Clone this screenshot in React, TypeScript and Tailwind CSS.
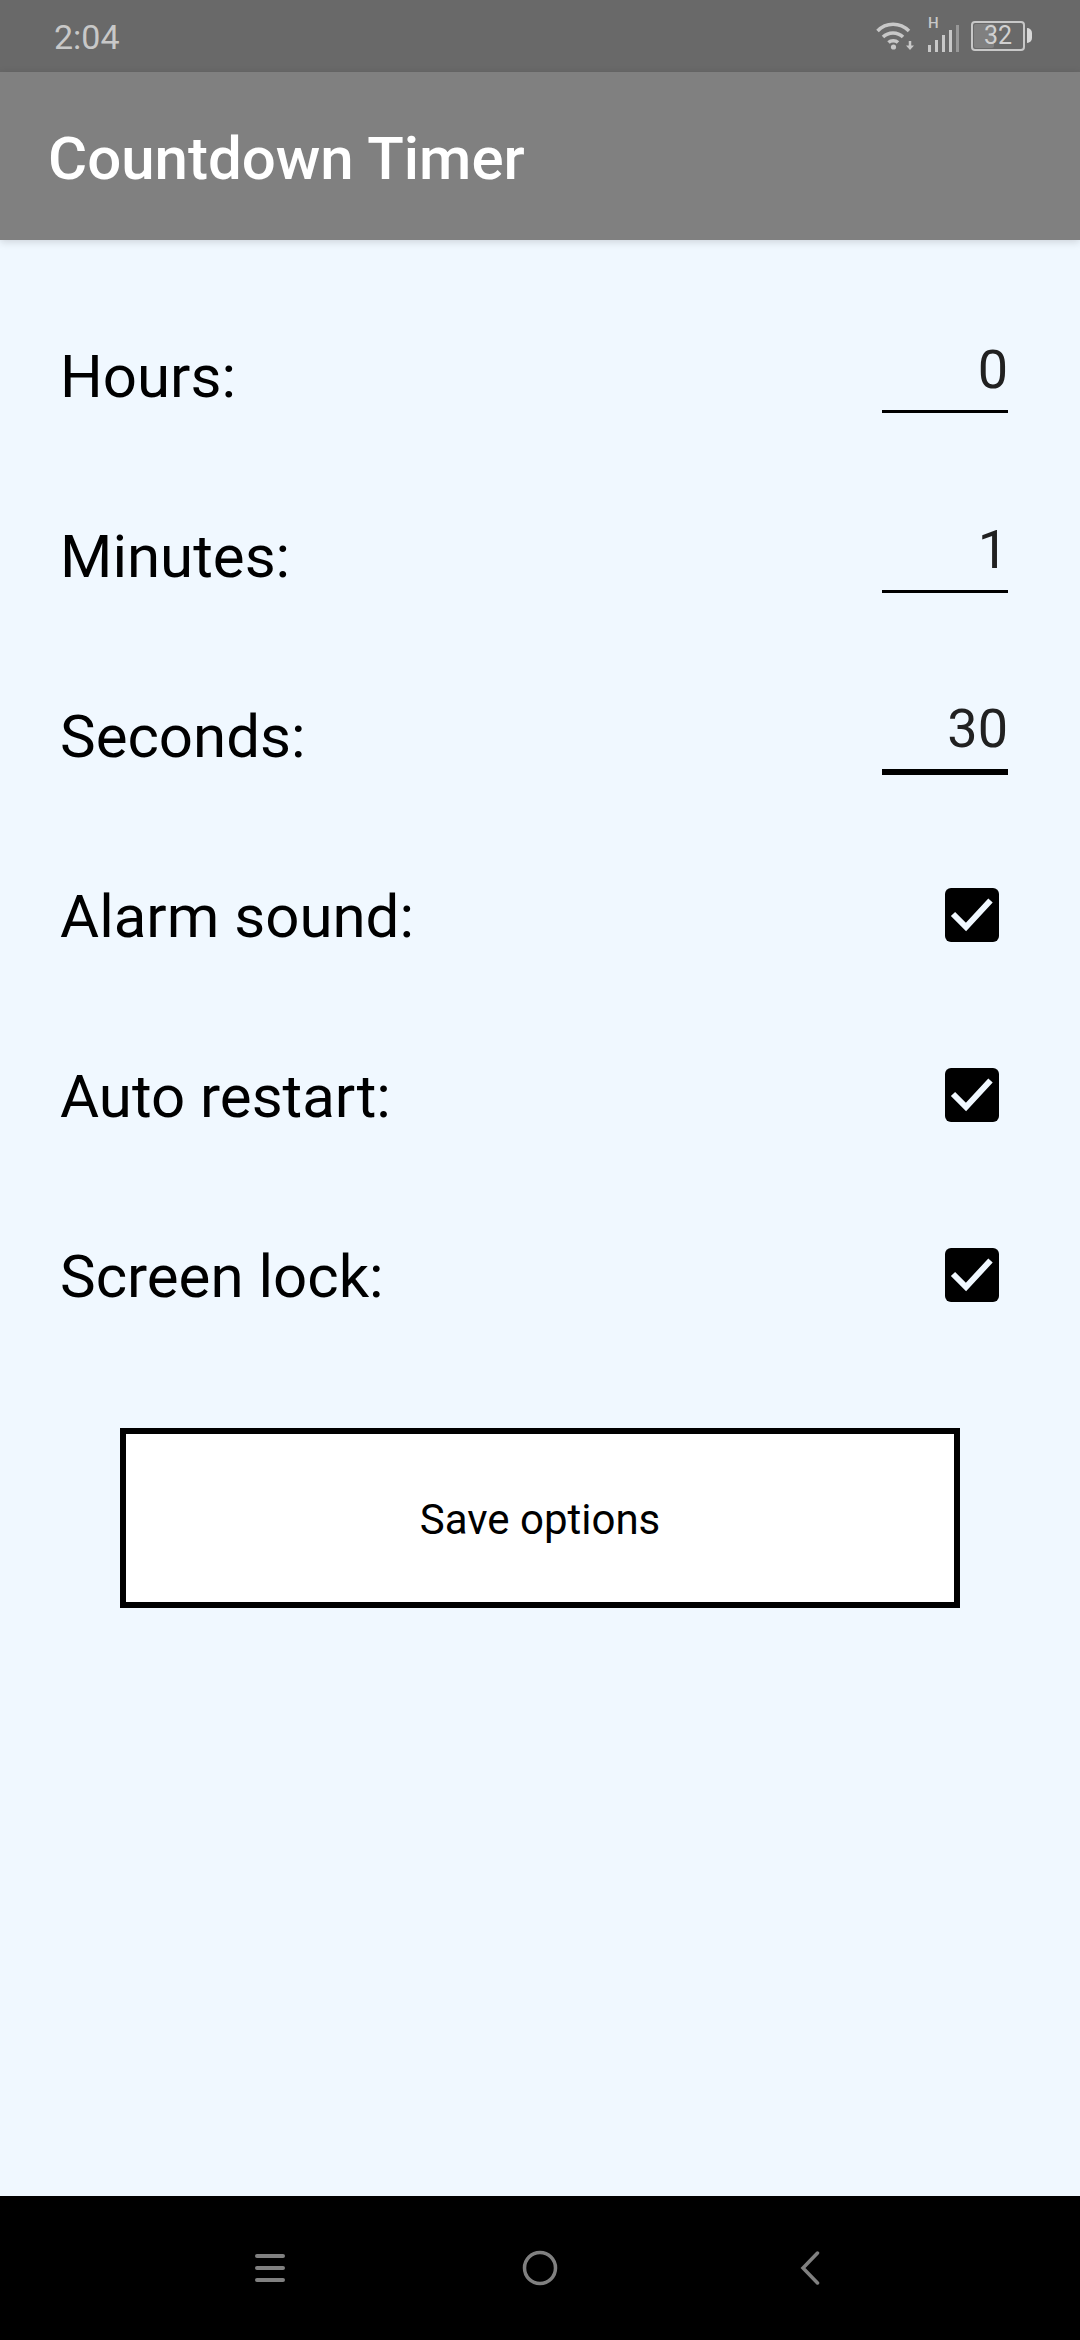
import React from 'react';

const roboto = "font-['Roboto',sans-serif]";

function NumberRow({ label, value, focused }: { label: string; value: string; focused?: boolean }) {
  return (
    <div className="h-[180px] flex items-center justify-between pl-[60px] pr-[72px]">
      <span className="text-[60px] leading-[70px] text-black">{label}</span>
      <div
        className={`w-[126px] pt-[2px] flex items-center justify-end text-[54px] leading-[64px] text-[#212121] border-black ${
          focused ? 'h-[87px] mb-[12px] border-b-[6px]' : 'h-[84px] mb-[13px] border-b-[3px]'
        }`}
      >
        {value}
      </div>
    </div>
  );
}

function CheckRow({ label }: { label: string }) {
  return (
    <div className="h-[180px] flex items-center justify-between pl-[60px] pr-[81px]">
      <span className="text-[60px] leading-[70px] text-black">{label}</span>
      <div className="w-[54px] h-[54px] mb-[4px] rounded-[6px] bg-black">
        <svg viewBox="0 0 54 54" className="w-[54px] h-[54px]" fill="none">
          <path d="M8 26 L21 39 L45.500 12.500" stroke="#f0f8ff" strokeWidth="6" />
        </svg>
      </div>
    </div>
  );
}

function StatusIcons() {
  return (
    <div className="flex items-start text-[#c8c8c8]">
      {/* wifi */}
      <svg width="38" height="30" viewBox="0 0 38 30" className="mt-[21px]" fill="none" stroke="currentColor" strokeWidth="3.500">
        <path d="M1.500 10 C10 1 24 1 33 10" />
        <path d="M7 16 C12.500 10.500 21.500 10.500 27 16" />
        <path d="M12.500 21.500 C15 19 19.500 19 22 21.500" />
        <circle cx="17.500" cy="26" r="2.600" fill="currentColor" stroke="none" />
        <path d="M34 20 V26" strokeWidth="2.500" />
        <path d="M30 24.500 H38 L34 29 Z" fill="currentColor" stroke="none" />
      </svg>
      {/* signal with H */}
      <div className="relative w-[32px] h-[52px] ml-[14px]">
        <span className="absolute left-0 top-[14px] text-[15px] leading-[18px] font-medium">H</span>
        <svg width="32" height="28" viewBox="0 0 32 28" className="absolute left-0 top-[25px]" fill="currentColor">
          <rect x="0" y="20" width="3" height="7" />
          <rect x="7" y="15" width="3" height="12" />
          <rect x="14" y="10" width="3" height="17" />
          <rect x="21" y="5" width="3" height="22" />
          <rect x="28" y="0" width="3" height="27" opacity="0.5" />
        </svg>
      </div>
      {/* battery */}
      <div className="relative w-[54px] h-[30px] ml-[11px] mt-[21px] rounded-[4px] border-2 border-[#c8c8c8] flex items-center justify-center">
        <div className="absolute left-[1px] top-[1px] bottom-[1px] w-[20px] rounded-[2px] bg-[#808080]" />
        <span className="relative text-[25px] leading-[26px] text-[#d0d0d0]">32</span>
      </div>
      <div className="w-[5px] h-[15px] ml-[2px] mt-[28px] rounded-r-[5px] bg-[#d8d8d8]" />
    </div>
  );
}

export default function App() {
  return (
    <div className={`w-[1080px] h-[2340px] flex flex-col bg-[#f0f8ff] overflow-hidden ${roboto}`}>
      {/* status bar */}
      <div className="h-[72px] shrink-0 flex justify-between pl-[54px] pr-[48px] bg-[#696969]">
        <span className="text-[34px] leading-[75px] text-[#c8c8c8]">2:04</span>
        <StatusIcons />
      </div>

      {/* app bar */}
      <div className="relative h-[168px] shrink-0 flex items-center pl-[48px] pt-[6px] bg-[#808080] shadow-[0_2px_8px_rgba(0,0,0,0.15)]">
        <h1 className="text-[60px] leading-[70px] font-medium text-white">Countdown Timer</h1>
      </div>

      {/* options */}
      <div className="flex-1 pt-[47px]">
        <NumberRow label="Hours:" value="0" />
        <NumberRow label="Minutes:" value="1" />
        <NumberRow label="Seconds:" value="30" focused />
        <CheckRow label="Alarm sound:" />
        <CheckRow label="Auto restart:" />
        <CheckRow label="Screen lock:" />
        <div className="pt-[61px] px-[120px]">
          <button className="w-[840px] h-[180px] pt-[2px] border-[6px] border-black bg-white text-[42px] text-black">
            Save options
          </button>
        </div>
      </div>

      {/* nav bar */}
      <div className="h-[144px] shrink-0 flex items-center justify-center pr-[5px] bg-black text-[#808080]">
        <svg width="30" height="30" viewBox="0 0 30 30" fill="none" stroke="currentColor" strokeWidth="4" strokeLinecap="round">
          <path d="M2 3 H28 M2 15 H28 M2 27 H28" />
        </svg>
        <svg width="36" height="36" viewBox="0 0 36 36" fill="none" stroke="currentColor" strokeWidth="3.500" className="ml-[237px]">
          <circle cx="18" cy="18" r="15.500" />
        </svg>
        <svg width="20" height="34" viewBox="0 0 20 34" fill="none" stroke="currentColor" strokeWidth="3.500" strokeLinecap="round" className="ml-[242px]">
          <path d="M17.500 2 L3 17 L17.500 32" />
        </svg>
      </div>
    </div>
  );
}
